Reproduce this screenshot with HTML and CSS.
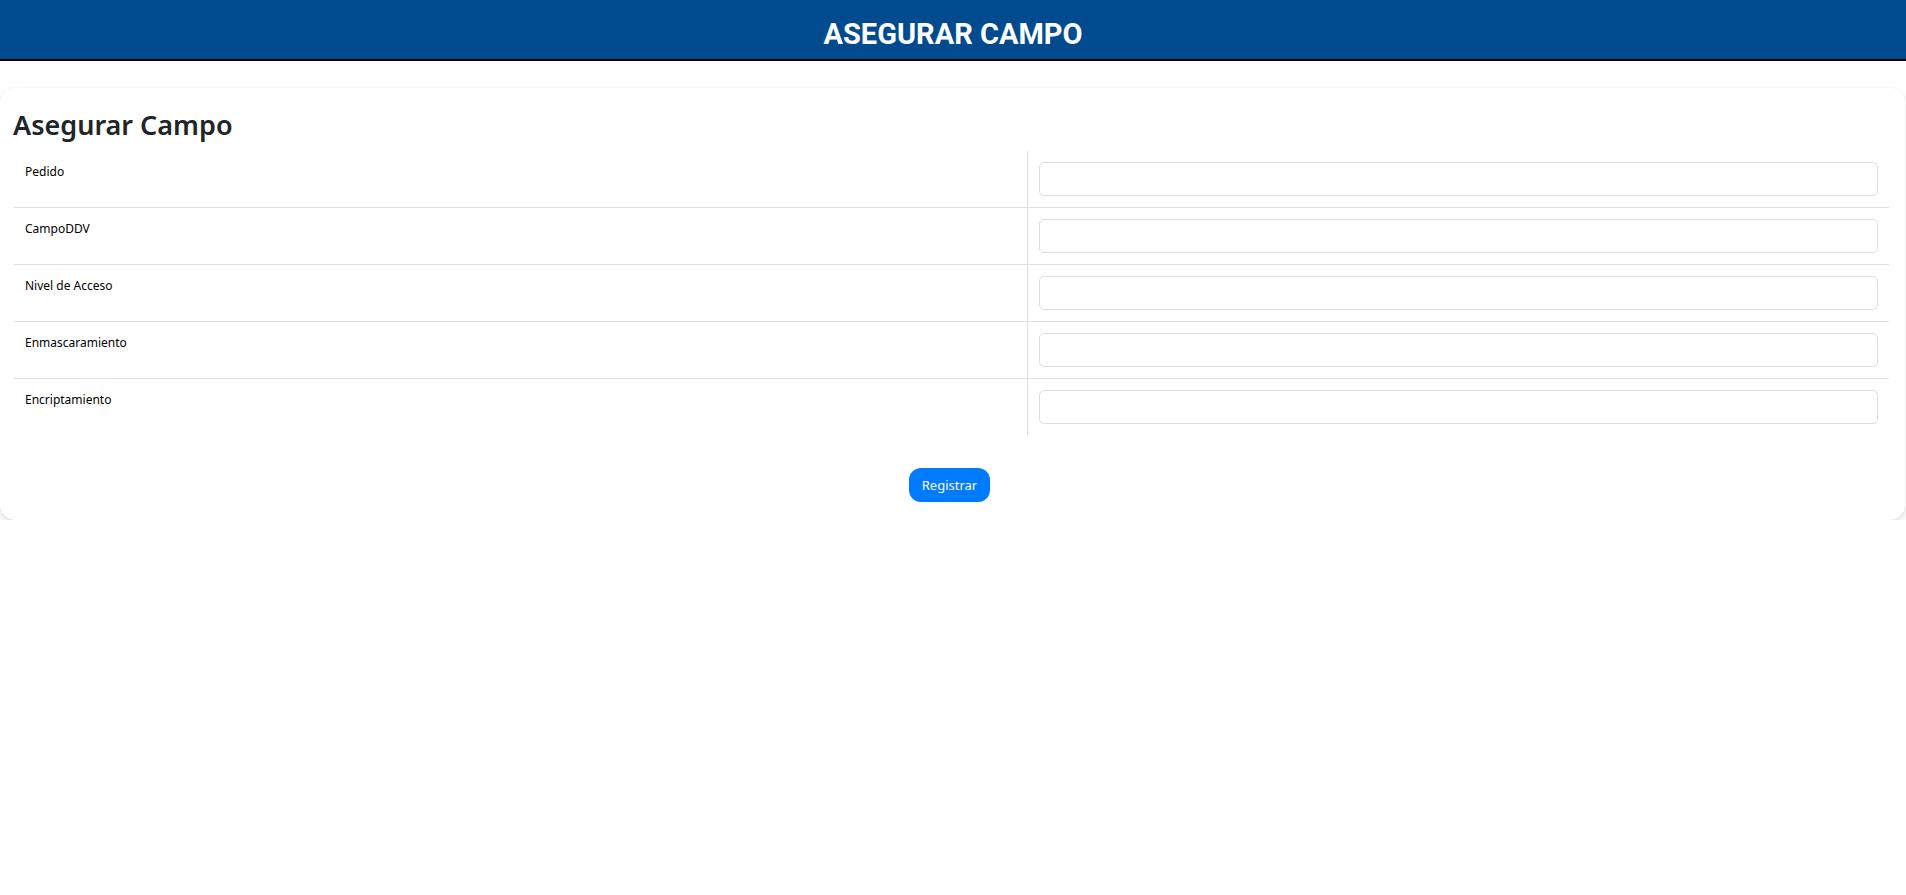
FILE: index.html
```html
<!DOCTYPE html>
<html lang="es">
<head>
<meta charset="utf-8">
<title>Asegurar Campo</title>
<link rel="stylesheet" href="styles.css">
</head>
<body>
<header class="topbar">
  <h1 class="topbar-title">ASEGURAR CAMPO</h1>
</header>
<main class="page">
  <section class="card">
    <h2 class="card-title">Asegurar Campo</h2>
    <div class="form-table">
      <div class="form-row">
        <div class="cell cell-label">Pedido</div>
        <div class="cell cell-field"><input class="field" type="text"></div>
      </div>
      <div class="form-row">
        <div class="cell cell-label">CampoDDV</div>
        <div class="cell cell-field"><input class="field" type="text"></div>
      </div>
      <div class="form-row">
        <div class="cell cell-label">Nivel de Acceso</div>
        <div class="cell cell-field"><input class="field" type="text"></div>
      </div>
      <div class="form-row">
        <div class="cell cell-label">Enmascaramiento</div>
        <div class="cell cell-field"><input class="field" type="text"></div>
      </div>
      <div class="form-row">
        <div class="cell cell-label">Encriptamiento</div>
        <div class="cell cell-field"><input class="field" type="text"></div>
      </div>
    </div>
    <div class="actions">
      <button class="btn-primary" type="button">Registrar</button>
    </div>
  </section>
</main>
</body>
</html>
```

FILE: styles.css
```css
* { box-sizing: border-box; }

html, body {
  margin: 0;
  padding: 0;
  background: #ffffff;
  font-family: "Noto Sans", "Open Sans", Arial, sans-serif;
  color: #212529;
}

.topbar {
  height: 61px;
  background: #004b8f;
  border-bottom: 2px solid #000000;
  display: flex;
  align-items: center;
  justify-content: center;
  padding-top: 8px;
}

.topbar-title {
  margin: 0;
  font-family: Roboto, "Liberation Sans", Arial, sans-serif;
  font-weight: 700;
  font-size: 29px;
  color: #ffffff;
  letter-spacing: 0;
}

.page {
  padding-top: 27px;
}

.card {
  margin-right: 1px;
  background: #ffffff;
  border-radius: 15px;
  box-shadow: 0 0 2px rgba(0, 0, 0, 0.04), 0 3px 7px rgba(0, 0, 0, 0.13);
  padding: 21px 16px 18px 10px;
}

.card-title {
  margin: 0 0 10px 3px;
  font-size: 27px;
  font-weight: 600;
  line-height: 1.2;
  color: #212529;
}

.form-table {
  margin-left: 4px;
}

.form-row {
  display: grid;
  grid-template-columns: 54.05% 1fr;
  border-bottom: 1px solid #dfdfe4;
}

.form-row:last-child {
  border-bottom: none;
}

.cell {
  padding: 11px;
}

.cell-label {
  font-size: 12px;
  line-height: 19px;
  color: #000000;
}

.cell-field {
  border-left: 1px solid #dfdfe4;
  padding-right: 11px;
}

.field {
  display: block;
  width: 100%;
  height: 34px;
  border: 1px solid #dcdce4;
  border-radius: 5px;
  background: #ffffff;
  margin: 0;
}

.actions {
  display: flex;
  justify-content: center;
  margin-top: 33px;
}

.btn-primary {
  height: 34px;
  padding: 0 13px;
  border: none;
  border-radius: 12px;
  background: #007bff;
  color: #ffffff;
  font-family: "Noto Sans", "Open Sans", Arial, sans-serif;
  font-size: 13px;
}
```
